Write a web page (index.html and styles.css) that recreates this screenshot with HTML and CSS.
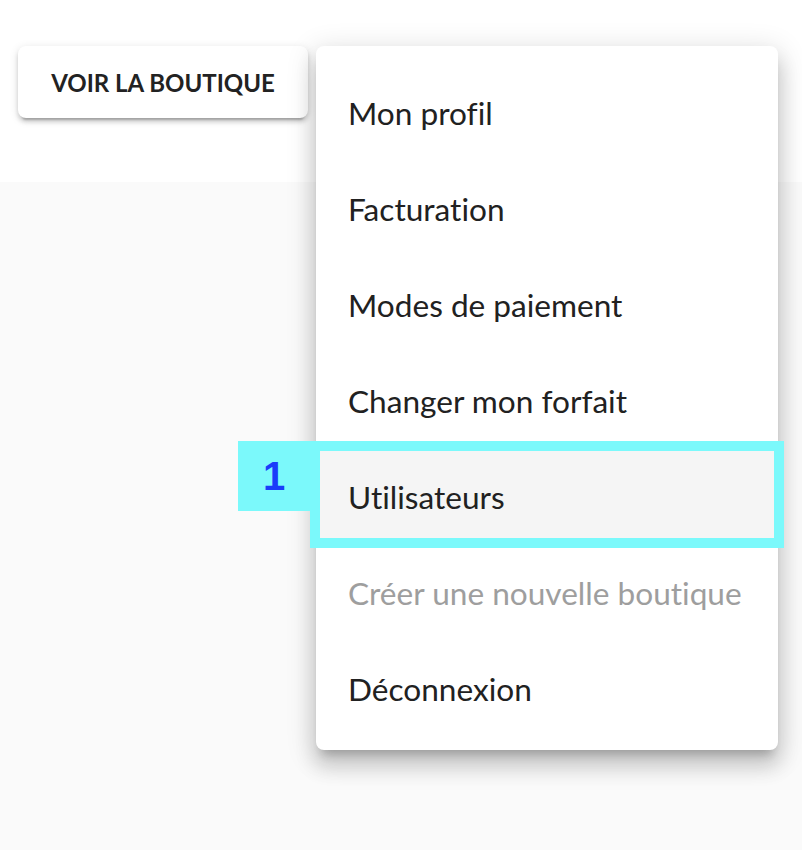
FILE: index.html
```html
<!DOCTYPE html>
<html lang="fr">
  <head>
    <meta charset="UTF-8" />
    <meta name="viewport" content="width=device-width, initial-scale=1.0" />
    <title>Boutique | Compte</title>
    <link rel="stylesheet" href="styles.css">
  </head>
  <body>
    <header class="topbar">
      <button class="shop-btn">Voir la boutique</button>
    </header>
    <main class="content"></main>
    <ul class="account-menu">
      <li class="menu-item">Mon profil</li>
      <li class="menu-item">Facturation</li>
      <li class="menu-item">Modes de paiement</li>
      <li class="menu-item">Changer mon forfait</li>
      <li class="menu-item is-active">
        Utilisateurs
        <span class="marker"><span class="marker-badge">1</span></span>
      </li>
      <li class="menu-item is-disabled">Créer une nouvelle boutique</li>
      <li class="menu-item">Déconnexion</li>
    </ul>
  </body>
</html>
```

FILE: styles.css
```css
body {
  font-family: Lato, "Open Sans", sans-serif;
  background-color: #fafafa;
  margin: 0;
  min-height: 850px;
  position: relative;
}
.topbar {
  height: 182px;
  box-sizing: border-box;
  padding: 46px 18px;
  background-color: #fff;
}
.shop-btn {
  width: 290px;
  height: 72px;
  padding: 0;
  border: none;
  border-radius: 8px;
  background-color: #fff;
  color: #222;
  font-family: Lato, sans-serif;
  font-weight: 700;
  font-size: 24px;
  white-space: nowrap;
  text-transform: uppercase;
  box-shadow: 0 6px 2px -4px rgba(0, 0, 0, 0.2), 0 4px 4px 0 rgba(0, 0, 0, 0.14),
    0 2px 10px 0 rgba(0, 0, 0, 0.12);
  cursor: pointer;
}
.account-menu {
  position: absolute;
  top: 46px;
  left: 316px;
  width: 462px;
  margin: 0;
  padding: 19px 0 13px;
  list-style: none;
  background-color: #fff;
  border-radius: 8px;
  box-shadow: 0 10px 10px -6px rgba(0, 0, 0, 0.2), 0 16px 20px 2px rgba(0, 0, 0, 0.14),
    0 6px 28px 4px rgba(0, 0, 0, 0.12);
}
.menu-item {
  position: relative;
  display: flex;
  align-items: center;
  height: 96px;
  padding: 0 32px;
  font-size: 31.6px;
  line-height: 48px;
  white-space: nowrap;
  font-variant-ligatures: no-common-ligatures;
  color: #212121;
}
.menu-item.is-active {
  background-color: #f5f5f5;
}
.menu-item.is-disabled {
  color: #9e9e9e;
}
.marker {
  position: absolute;
  top: -8px;
  left: -6px;
  right: -6px;
  bottom: -3px;
  border: 10px solid #7bf9fb;
}
.marker-badge {
  position: absolute;
  right: 100%;
  top: -10px;
  width: 82px;
  height: 70px;
  padding-right: 10px;
  box-sizing: border-box;
  display: flex;
  align-items: center;
  justify-content: center;
  background-color: #7bf9fb;
  color: #1a3cfa;
  font-family: "Liberation Sans", Arial, sans-serif;
  font-weight: 700;
  font-size: 40px;
}
```
